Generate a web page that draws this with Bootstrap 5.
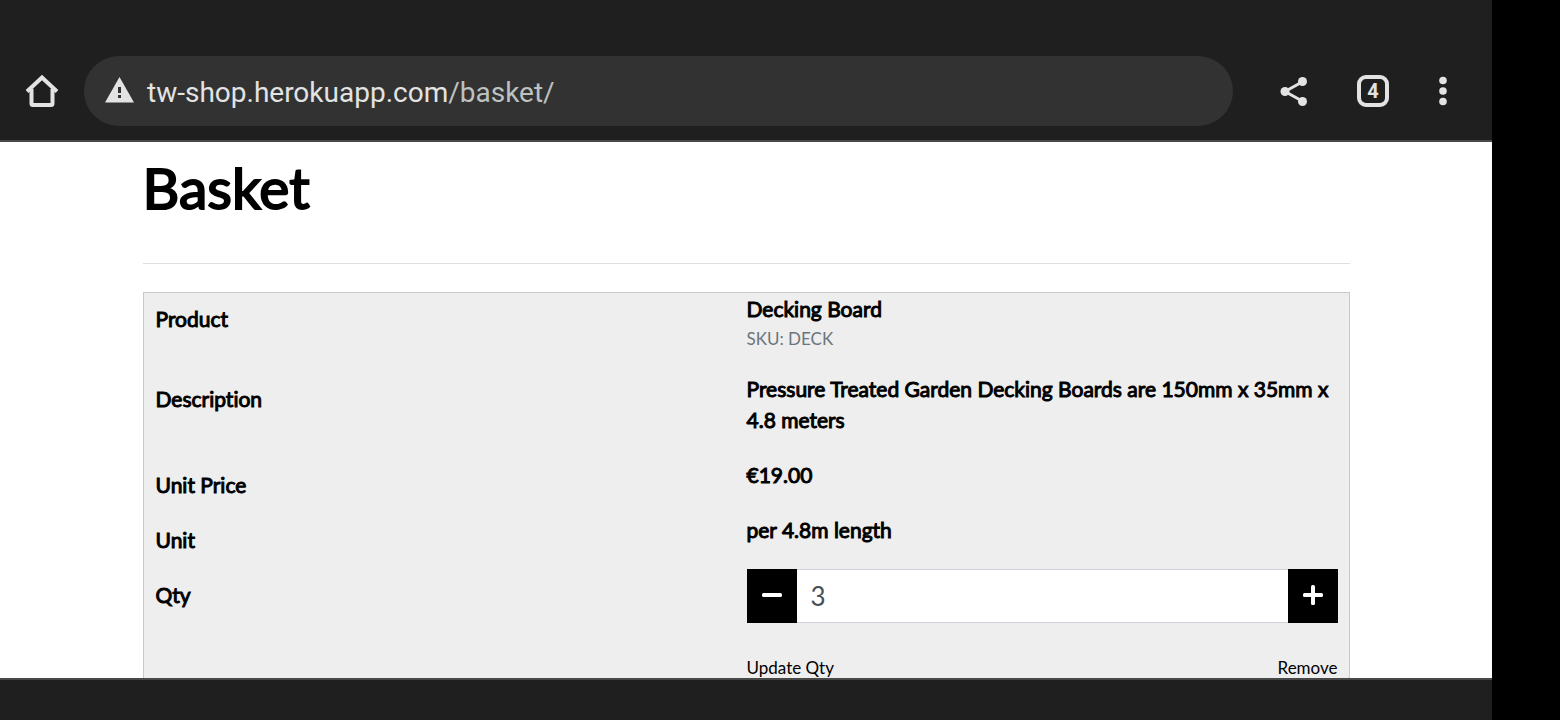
<!DOCTYPE html>
<html lang="en">
<head>
<meta charset="utf-8">
<meta name="viewport" content="width=device-width, initial-scale=1">
<title>Basket</title>
<link href="https://cdn.jsdelivr.net/npm/bootstrap@5.3.0/dist/css/bootstrap.min.css" rel="stylesheet">
<style>
  body { font-family: Lato, sans-serif; color: #000; font-size: 21px; line-height: 31px; font-variant-ligatures: none; }
  .cutout { width: 68px; background: #000; }
  .chrome { background: #1f1f1f; }
  .toolbar { padding: 56px 37px 14px 20px; border-bottom: 2px solid #484848; }
  .bottombar { height: 42px; border-top: 2px solid #484848; }
  .icon-btn { width: 44px; height: 44px; padding: 0; border: 0; background: none; color: #e3e3e3; display: flex; align-items: center; justify-content: center; }
  .icon-btn-slim { width: 24px; }
  .address { height: 70px; margin: 0 38px 0 20px; padding: 0 20px; border-radius: 35px; background: #323232; color: #e3e3e3; font-family: Roboto, sans-serif; font-size: 28px; line-height: 34px; }
  .address-path { color: #bdc1c0; }
  .tool-gap { gap: 36px; }
  .sheet { max-width: 1207px; }
  .faux-strong { font-weight: 400; -webkit-text-stroke: 1px currentColor; }
  .title { font-size: 57px; line-height: 70px; font-weight: 400; -webkit-text-stroke: 2px currentColor; padding-top: 10px; margin: 0; }
  .rule { margin: 41px 0 28px; border-top: 1px solid #dfdfdf; opacity: 1; }
  .basket-box { background: #eee; border: 1px solid #c8c8c8; padding: 0 11px 0 12px; }
  .basket-table { table-layout: fixed; width: 100%; }
  .basket-table th { padding: 10px 0 0; vertical-align: top; }
  .basket-table td { padding: 0 0 24px; vertical-align: top; }
  .basket-table .product-cell { padding-bottom: 20px; }
  .sku { font-size: 17px; line-height: 29px; color: #6c757d; }
  .qty-btn { width: 50px; height: 54px; padding: 0 0 6px; border-radius: 0; border: 0; }
  .qty-input { height: 54px; border: 1px solid #ced4da; border-width: 1px 0; border-radius: 0; padding: 0 15px; font-size: 26px; color: #495057; }
  .actions { padding-top: 32px; font-size: 17px; line-height: 26px; }
</style>
</head>
<body>
<div class="d-flex vh-100 overflow-hidden">
  <div class="d-flex flex-column flex-grow-1 overflow-hidden">
    <header class="chrome toolbar d-flex align-items-center flex-shrink-0">
      <button class="icon-btn" type="button" aria-label="Home">
        <svg width="36" height="36" viewBox="0 0 36 36" fill="none" stroke="currentColor" stroke-width="4" stroke-linejoin="round"><path d="M3 18.500 18 4.500l15 14" stroke-linejoin="miter"/><path d="M7.500 16v14.500q0 1.500 1.500 1.500h18q1.500 0 1.500-1.500V16"/></svg>
      </button>
      <div class="address d-flex align-items-center flex-grow-1">
        <svg class="flex-shrink-0" width="31" height="28" viewBox="0 0 31 28"><path fill="#e3e3e3" d="M15.500 0 30 25.500H1z"/><path fill="#323232" d="M14 10h3v6h-3zM14 18h3v3h-3z"/></svg>
        <span class="ms-2 ps-1 pt-1">tw-shop.herokuapp.com<span class="address-path">/basket/</span></span>
      </div>
      <div class="d-flex tool-gap">
        <button class="icon-btn" type="button" aria-label="Share">
          <svg width="30" height="32" viewBox="0 0 30 32" fill="currentColor"><path d="M25 6.500 7 16.500l18 10" fill="none" stroke="currentColor" stroke-width="3"/><circle cx="24.500" cy="6.500" r="4.500"/><circle cx="7" cy="16.500" r="4.500"/><circle cx="24.500" cy="26.500" r="4.500"/></svg>
        </button>
        <button class="icon-btn" type="button" aria-label="Tabs">
          <svg width="32" height="32" viewBox="0 0 32 32"><rect x="2" y="2" width="28" height="28" rx="7" fill="none" stroke="currentColor" stroke-width="4"/><text x="16" y="23" text-anchor="middle" font-family="Roboto, sans-serif" font-weight="700" font-size="20" fill="currentColor">4</text></svg>
        </button>
        <button class="icon-btn icon-btn-slim" type="button" aria-label="Menu">
          <svg width="8" height="30" viewBox="0 0 8 30" fill="currentColor"><circle cx="4" cy="4.500" r="3.800"/><circle cx="4" cy="15" r="3.800"/><circle cx="4" cy="25.500" r="3.800"/></svg>
        </button>
      </div>
    </header>

    <main class="flex-grow-1 overflow-hidden bg-white">
      <div class="sheet mx-auto">
        <h1 class="title">Basket</h1>
        <hr class="rule">
        <div class="basket-box">
          <table class="basket-table">
            <tbody>
              <tr>
                <th class="faux-strong" scope="row">Product</th>
                <td class="product-cell"><div class="faux-strong">Decking Board</div><div class="sku">SKU: DECK</div></td>
              </tr>
              <tr>
                <th class="faux-strong" scope="row">Description</th>
                <td class="faux-strong">Pressure Treated Garden Decking Boards are 150mm x 35mm x 4.8 meters</td>
              </tr>
              <tr>
                <th class="faux-strong" scope="row">Unit Price</th>
                <td class="faux-strong">€19.00</td>
              </tr>
              <tr>
                <th class="faux-strong" scope="row">Unit</th>
                <td class="faux-strong">per 4.8m length</td>
              </tr>
              <tr>
                <th class="faux-strong" scope="row"><label for="qty">Qty</label></th>
                <td>
                  <div class="input-group flex-nowrap">
                    <button class="btn btn-dark bg-black qty-btn" type="button" aria-label="Decrease quantity">
                      <svg width="20" height="20" viewBox="0 0 20 20"><rect y="8" width="20" height="4" rx="1.500" fill="#fff"/></svg>
                    </button>
                    <input class="form-control qty-input" id="qty" type="text" inputmode="numeric" value="3">
                    <button class="btn btn-dark bg-black qty-btn" type="button" aria-label="Increase quantity">
                      <svg width="20" height="20" viewBox="0 0 20 20" fill="#fff"><rect y="8" width="20" height="4" rx="1.500"/><rect x="8" width="4" height="20" rx="1.500"/></svg>
                    </button>
                  </div>
                  <div class="actions d-flex justify-content-between">
                    <a class="text-black text-decoration-none" href="#update">Update Qty</a>
                    <a class="text-black text-decoration-none" href="#remove">Remove</a>
                  </div>
                </td>
              </tr>
            </tbody>
          </table>
        </div>
      </div>
    </main>

    <footer class="chrome bottombar flex-shrink-0"></footer>
  </div>
  <div class="cutout flex-shrink-0"></div>
</div>
<script src="https://cdn.jsdelivr.net/npm/bootstrap@5.3.0/dist/js/bootstrap.bundle.min.js"></script>
</body>
</html>
